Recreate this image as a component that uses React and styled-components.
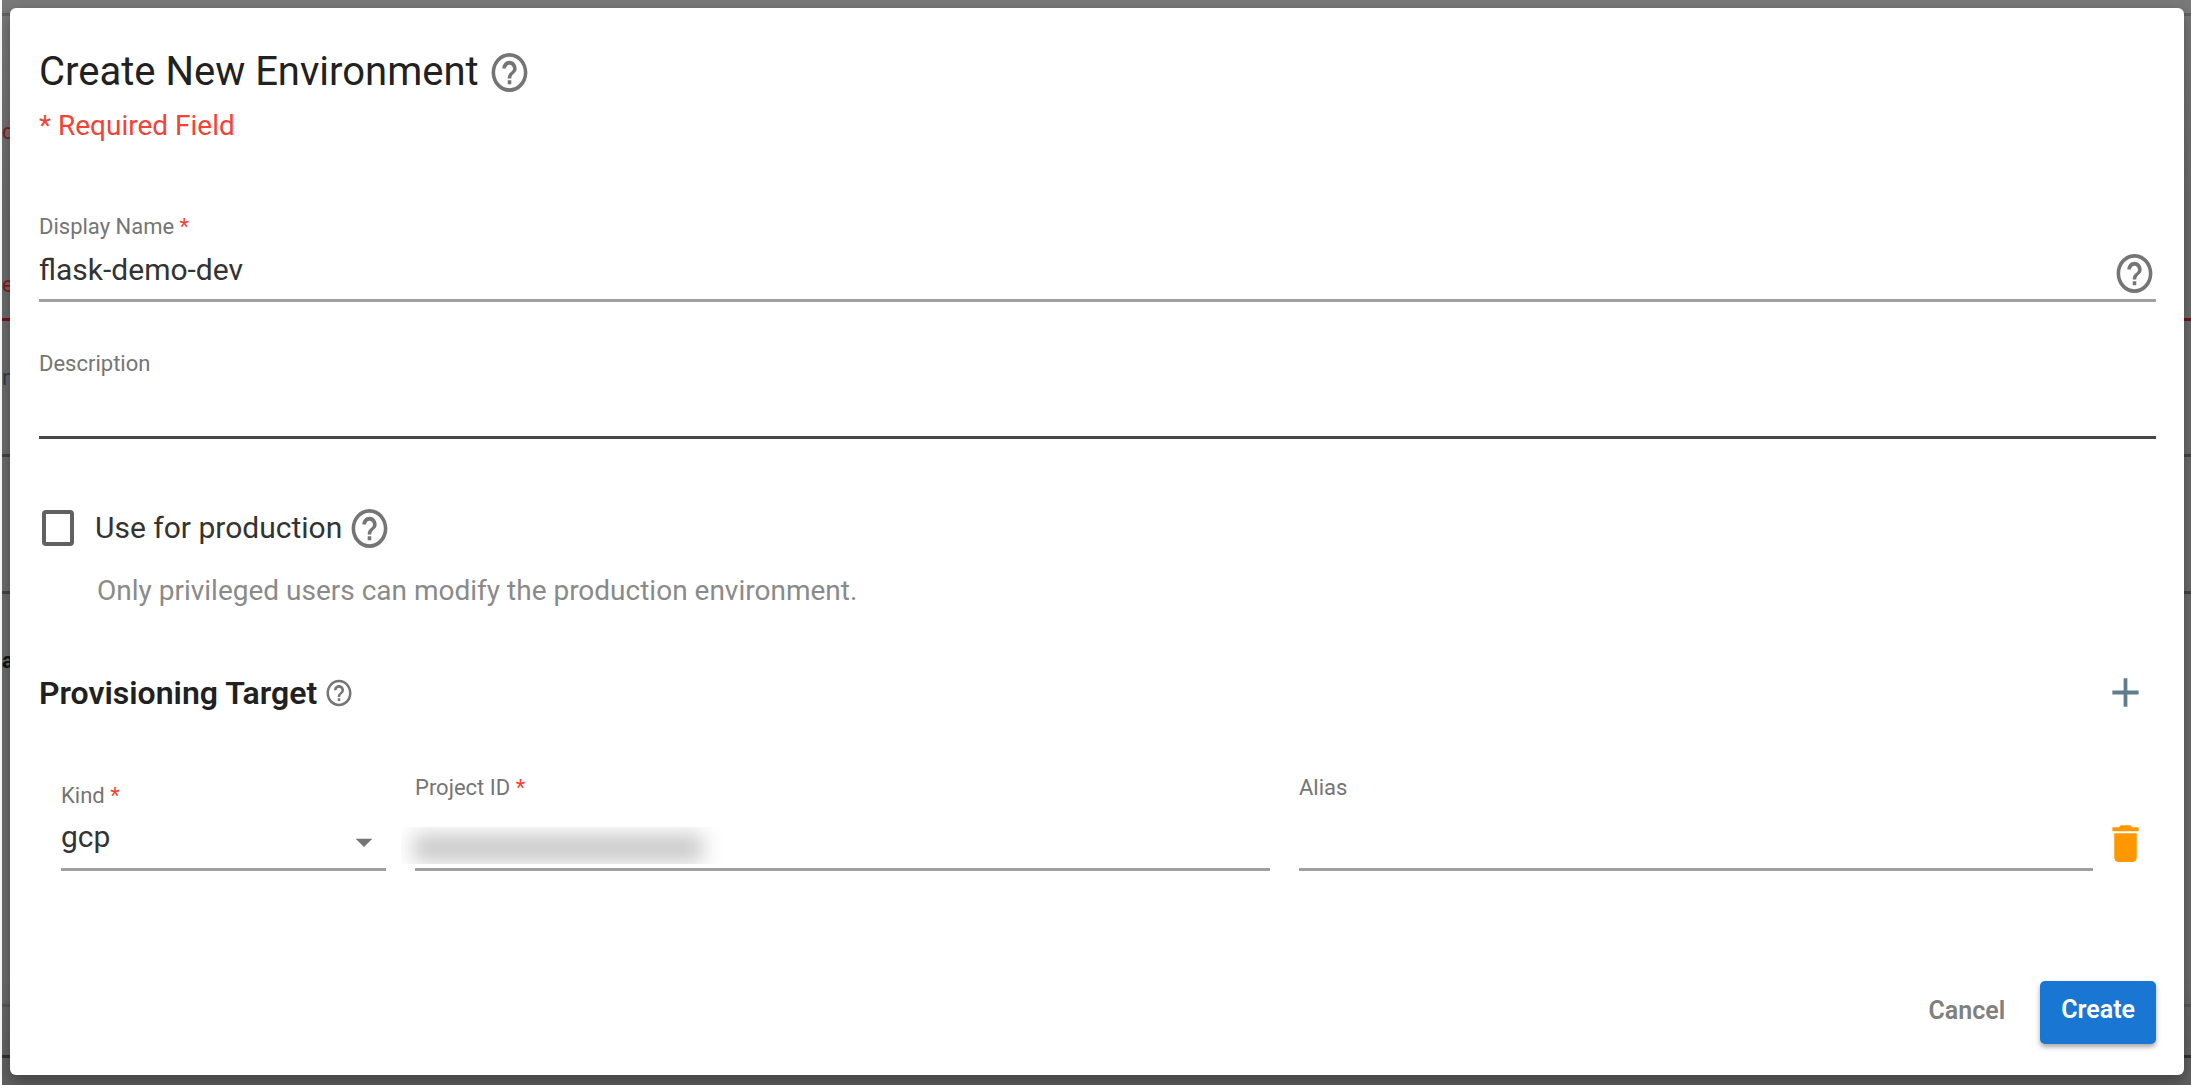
import { useState } from "react"
import styled, { createGlobalStyle } from "styled-components"
import { MdAdd, MdArrowDropDown, MdDelete, MdHelpOutline } from "react-icons/md"

const App = () => {
  const [name, setName] = useState("flask-demo-dev")
  const [description, setDescription] = useState("")
  const [production, setProduction] = useState(false)
  const [kind, setKind] = useState("gcp")
  const [alias, setAlias] = useState("")

  return (
    <Screen>
      <GlobalStyle />
      <Backdrop aria-hidden='true'>
        <Rule $top={13} $color='#626262' />
        <Peek $top={118} $color='#8b1a1a'>d</Peek>
        <Peek $top={271} $color='#8b1a1a'>e</Peek>
        <Rule $top={318} $color='#7a1414' />
        <Peek $top={364} $color='#33394a'>n</Peek>
        <Rule $top={454} $color='#444444' />
        <Rule $top={591} $color='#444444' />
        <Peek $top={647} $color='#111111' $bold>a</Peek>
        <Rule $top={1004} $color='#595959' />
        <Rule $top={1055} $color='#333333' />
      </Backdrop>
      <Dialog role='dialog' aria-labelledby='dialog-title'>
        <Header>
          <Title id='dialog-title'>Create New Environment</Title>
          <HelpIcon />
        </Header>
        <Required>* Required Field</Required>

        <Field $space={71}>
          <Label htmlFor='name'>
            Display Name <Star>*</Star>
          </Label>
          <Control>
            <Input id='name' value={name} onChange={(e) => setName(e.target.value)} />
            <HelpIcon />
          </Control>
        </Field>

        <Field $space={48}>
          <Label htmlFor='description'>Description</Label>
          <Control $active>
            <Input
              id='description'
              value={description}
              onChange={(e) => setDescription(e.target.value)}
            />
          </Control>
        </Field>

        <CheckRow>
          <Checkbox
            id='production'
            type='checkbox'
            checked={production}
            onChange={(e) => setProduction(e.target.checked)}
          />
          <CheckLabel htmlFor='production'>Use for production</CheckLabel>
          <HelpIcon />
        </CheckRow>
        <Hint>Only privileged users can modify the production environment.</Hint>

        <SectionHeader>
          <SectionTitle>Provisioning Target</SectionTitle>
          <SmallHelpIcon />
          <IconButton type='button' aria-label='Add target' $color='#607d8b'>
            <MdAdd preserveAspectRatio='none' />
          </IconButton>
        </SectionHeader>

        <TargetRow>
          <Field>
            <Label htmlFor='kind'>
              Kind <Star>*</Star>
            </Label>
            <Control>
              <Select id='kind' value={kind} onChange={(e) => setKind(e.target.value)}>
                <option value='gcp'>gcp</option>
                <option value='aws'>aws</option>
              </Select>
              <Arrow />
            </Control>
          </Field>
          <Field>
            <Label htmlFor='project' $tall>
              Project ID <Star>*</Star>
            </Label>
            <Control>
              <Input id='project' readOnly />
              <Mask />
            </Control>
          </Field>
          <Field>
            <Label htmlFor='alias' $tall>
              Alias
            </Label>
            <Control>
              <Input id='alias' value={alias} onChange={(e) => setAlias(e.target.value)} />
            </Control>
          </Field>
          <IconButton type='button' aria-label='Delete target' $color='#ff9800'>
            <MdDelete preserveAspectRatio='none' />
          </IconButton>
        </TargetRow>

        <Actions>
          <Cancel type='button'>Cancel</Cancel>
          <Create type='button'>Create</Create>
        </Actions>
      </Dialog>
    </Screen>
  )
}

const GlobalStyle = createGlobalStyle`
  * {
    box-sizing: border-box;
  }

  body {
    margin: 0;
    background: #ffffff;
    font-family: Roboto, "Liberation Sans", sans-serif;
  }

  button,
  input,
  select {
    font-family: inherit;
  }
`

const Screen = styled.div`
  position: relative;
  min-height: 100vh;
  padding: 8px 7px 10px 10px;
`

const Backdrop = styled.div`
  position: absolute;
  inset: 0 0 0 2px;
  background: linear-gradient(#7a7a7a, #6c6c6c 20%, #6c6c6c 90%, #606060);
`

const Rule = styled.div`
  position: absolute;
  top: ${(props) => props.$top}px;
  left: 0;
  right: 0;
  height: 3px;
  background: ${(props) => props.$color};
`

const Peek = styled.span`
  position: absolute;
  top: ${(props) => props.$top}px;
  left: 0;
  color: ${(props) => props.$color};
  font-size: 22px;
  font-weight: ${(props) => (props.$bold ? 700 : 400)};
  line-height: 28px;
`

const Dialog = styled.main`
  position: relative;
  display: flex;
  flex-direction: column;
  padding: 40px 28px 31px 29px;
  border-radius: 6px;
  background: #ffffff;
  box-shadow: 0 6px 16px rgba(0, 0, 0, 0.35);
`

const Header = styled.header`
  display: flex;
  align-items: center;
  gap: 9px;
  height: 48px;
`

const Title = styled.h1`
  margin: 0;
  color: #212121;
  font-size: 40px;
  font-weight: 400;
  line-height: 48px;
`

const HelpIcon = styled(MdHelpOutline).attrs({ preserveAspectRatio: "none" })`
  flex: none;
  width: 43px;
  height: 47px;
  color: #757575;
`

const SmallHelpIcon = styled(HelpIcon)`
  width: 30px;
  height: 32px;
`

const Required = styled.p`
  margin: 14px 0 0;
  color: #f44336;
  font-size: 28px;
  line-height: 32px;
`

const Field = styled.div`
  display: flex;
  flex-direction: column;
  min-width: 0;
  margin-top: ${(props) => props.$space || 0}px;
`

const Label = styled.label`
  margin-bottom: ${(props) => (props.$tall ? 20 : 12)}px;
  color: #757575;
  font-size: 22px;
  line-height: 28px;
`

const Star = styled.span`
  color: #f44336;
`

const Control = styled.div`
  position: relative;
  display: flex;
  align-items: center;
  height: 49px;
  padding-bottom: 5px;
  border-bottom: 3px solid ${(props) => (props.$active ? "#484848" : "#a0a0a0")};
`

const Input = styled.input`
  flex: 1;
  min-width: 0;
  height: 36px;
  margin-bottom: 8px;
  padding: 0;
  border: none;
  outline: none;
  background: none;
  color: #333333;
  font-size: 30px;
`

const Select = styled.select`
  flex: 1;
  height: 36px;
  margin-bottom: 12px;
  padding: 0;
  appearance: none;
  border: none;
  outline: none;
  background: none;
  color: #333333;
  font-size: 30px;
`

const Arrow = styled(MdArrowDropDown)`
  position: absolute;
  right: 2px;
  top: -2px;
  width: 40px;
  height: 44px;
  color: #757575;
  pointer-events: none;
`

/* smudge that hides the project id */
const Mask = styled.div`
  position: absolute;
  left: -14px;
  bottom: 4px;
  width: 324px;
  height: 37px;
  overflow: hidden;

  &::before {
    content: "";
    display: block;
    width: 290px;
    height: 28px;
    margin: 7px 0 0 12px;
    background: #cacaca;
    filter: blur(10px);
  }
`

const CheckRow = styled.div`
  display: flex;
  align-items: center;
  height: 40px;
  margin-top: 69px;
  padding-left: 3px;
`

const Checkbox = styled.input`
  width: 32px;
  height: 36px;
  margin: 0;
  appearance: none;
  border: 4px solid #616161;
  border-radius: 4px;

  &:checked {
    background: #1976d2;
  }
`

const CheckLabel = styled.label`
  margin: 0 6px 0 21px;
  color: #333333;
  font-size: 30px;
  line-height: 36px;
`

const Hint = styled.p`
  margin: 27px 0 0 58px;
  color: #8a8a8a;
  font-size: 28px;
  line-height: 32px;
`

const SectionHeader = styled.div`
  display: flex;
  align-items: center;
  gap: 7px;
  margin-top: 61px;
  padding-right: 8px;
`

const SectionTitle = styled.h2`
  margin: 0;
  color: #212121;
  font-size: 32px;
  font-weight: 600;
  line-height: 36px;
`

const IconButton = styled.button`
  flex: none;
  width: 45px;
  height: 49px;
  margin-left: auto;
  padding: 0;
  border: none;
  background: none;
  color: ${(props) => props.$color};
  cursor: pointer;

  svg {
    display: block;
    width: 100%;
    height: 100%;
  }
`

const TargetRow = styled.div`
  display: grid;
  grid-template-columns: 325fr 855fr 794fr auto;
  align-items: end;
  column-gap: 29px;
  margin-top: 57px;
  padding: 0 8px 0 22px;

  ${IconButton} {
    margin: 0 0 3px -19px;
  }
`

const Actions = styled.footer`
  display: flex;
  justify-content: flex-end;
  gap: 14px;
  margin-top: 110px;
`

const Cancel = styled.button`
  height: 58px;
  padding: 0 21px;
  border: none;
  border-radius: 5px;
  background: none;
  color: #808080;
  font-size: 25px;
  font-weight: 600;
  cursor: pointer;
`

const Create = styled(Cancel)`
  height: 63px;
  padding-bottom: 6px;
  background: #1976d2;
  color: #ffffff;
  box-shadow: 0 3px 5px rgba(0, 0, 0, 0.35);
`

export default App
